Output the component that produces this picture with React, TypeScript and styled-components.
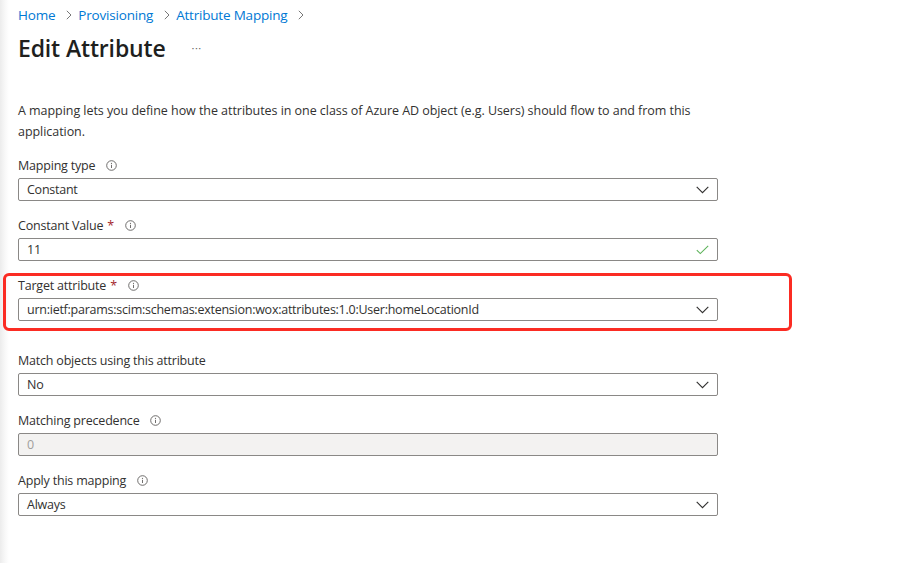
import React from 'react';
import styled, { createGlobalStyle } from 'styled-components';

const BLUE  = '#0078d4';
const TXT   = '#323130';
const BDR   = '#8a8886';
const RED   = '#a4262c';
const FONT  = `'Open Sans', 'Noto Sans', sans-serif`;

const Global = createGlobalStyle`
  html, body { margin: 0; padding: 0; background: #fff; }
  body {
    font-family: ${FONT};
    color: ${TXT};
    background: linear-gradient(to right, #ececec 0px, #f8f8f8 5px, #fff 9px);
    min-height: 563px;
  }
`;

const Page = styled.div`
  padding: 5px 18px 0;
  width: 700px;
`;

const Crumbs = styled.nav`
  display: flex;
  align-items: center;
  height: 20px;
  font-size: 13.5px;
  letter-spacing: -0.2px;
`;

const Crumb = styled.a`
  color: ${BLUE};
  text-decoration: none;
`;

const Sep = styled.span`
  display: inline-flex;
  margin: 0 6px 0 11px;
  color: #888;
`;

const TitleRow = styled.div`
  display: flex;
  align-items: center;
  height: 32px;
  margin-top: 7px;
`;

const Title = styled.h1`
  margin: 0;
  font-size: 23px;
  font-weight: 600;
  letter-spacing: -0.15px;
  color: #201f1e;
`;

const More = styled.span`
  margin-left: 26px;
  font-size: 11px;
  color: #666;
  letter-spacing: 0.5px;
  position: relative;
  top: -1px;
`;

const Desc = styled.p`
  margin: 36px 0 14px;
  font-size: 12.5px;
  line-height: 21px;
  letter-spacing: -0.05px;
`;

const Form = styled.div`
  display: flex;
  flex-direction: column;
  gap: 15px;
`;

const Field = styled.div<{ $gapAfter?: number }>`
  display: flex;
  flex-direction: column;
  gap: 4px;
  margin-bottom: ${p => p.$gapAfter ?? 0}px;
`;

const Highlight = styled(Field)`
  position: relative;
  &::after {
    content: '';
    position: absolute;
    top: -3px;
    bottom: -10px;
    left: -15px;
    right: -74px;
    border: 3px solid #fb2c23;
    border-radius: 6px;
    pointer-events: none;
  }
`;

const Label = styled.label`
  display: flex;
  align-items: center;
  height: 18px;
  font-size: 12.5px;
  letter-spacing: -0.2px;
`;

const Req = styled.span`
  color: ${RED};
  margin-left: 4px;
`;

const InfoWrap = styled.span`
  display: inline-flex;
  margin-left: 11px;
`;

const Box = styled.div<{ $disabled?: boolean }>`
  display: flex;
  align-items: center;
  justify-content: space-between;
  box-sizing: border-box;
  height: 23px;
  padding: 0 7px 0 8px;
  border: 1px solid ${BDR};
  border-radius: 2px;
  background: ${p => (p.$disabled ? '#f3f2f1' : '#fff')};
  color: ${p => (p.$disabled ? '#a19f9d' : TXT)};
  font-size: 12.5px;
  letter-spacing: -0.25px;
`;

const IconSlot = styled.span`
  display: inline-flex;
  margin-right: 1px;
`;

function Info() {
  return (
    <InfoWrap>
      <svg width="11" height="11" viewBox="0 0 11 11">
        <circle cx="5.5" cy="5.5" r="4.8" fill="none" stroke="#605e5c" strokeWidth="0.9" />
        <circle cx="5.5" cy="3.3" r="0.6" fill="#605e5c" />
        <line x1="5.5" y1="4.8" x2="5.5" y2="8" stroke="#605e5c" strokeWidth="0.9" />
      </svg>
    </InfoWrap>
  );
}

function Chevron() {
  return (
    <IconSlot>
      <svg width="13" height="8" viewBox="0 0 13 8">
        <path d="M0.7 0.8 L6.5 6.6 L12.3 0.8" fill="none" stroke="#323130" strokeWidth="1.1" />
      </svg>
    </IconSlot>
  );
}

function Check() {
  return (
    <IconSlot>
      <svg width="13" height="10" viewBox="0 0 13 10">
        <path d="M0.8 5.2 L4.3 8.6 L12.2 0.8" fill="none" stroke="#5db35a" strokeWidth="1.1" />
      </svg>
    </IconSlot>
  );
}

function CrumbSep() {
  return (
    <Sep>
      <svg width="6" height="10" viewBox="0 0 6 10">
        <path d="M0.8 0.8 L5 5 L0.8 9.2" fill="none" stroke="#777" strokeWidth="1" />
      </svg>
    </Sep>
  );
}

export default function App() {
  return (
    <>
      <Global />
      <Page>
        <Crumbs>
          <Crumb>Home</Crumb>
          <CrumbSep />
          <Crumb>Provisioning</Crumb>
          <CrumbSep />
          <Crumb>Attribute Mapping</Crumb>
          <CrumbSep />
        </Crumbs>
        <TitleRow>
          <Title>Edit Attribute</Title>
          <More>···</More>
        </TitleRow>
        <Desc>
          A mapping lets you define how the attributes in one class of Azure AD object (e.g. Users) should flow to and from this
          application.
        </Desc>
        <Form>
          <Field>
            <Label>Mapping type<Info /></Label>
            <Box>Constant<Chevron /></Box>
          </Field>
          <Field>
            <Label>Constant Value<Req>*</Req><Info /></Label>
            <Box>11<Check /></Box>
          </Field>
          <Highlight $gapAfter={15}>
            <Label>Target attribute<Req>*</Req><Info /></Label>
            <Box>urn:ietf:params:scim:schemas:extension:wox:attributes:1.0:User:homeLocationId<Chevron /></Box>
          </Highlight>
          <Field>
            <Label>Match objects using this attribute</Label>
            <Box>No<Chevron /></Box>
          </Field>
          <Field>
            <Label>Matching precedence<Info /></Label>
            <Box $disabled>0</Box>
          </Field>
          <Field>
            <Label>Apply this mapping<Info /></Label>
            <Box>Always<Chevron /></Box>
          </Field>
        </Form>
      </Page>
    </>
  );
}
